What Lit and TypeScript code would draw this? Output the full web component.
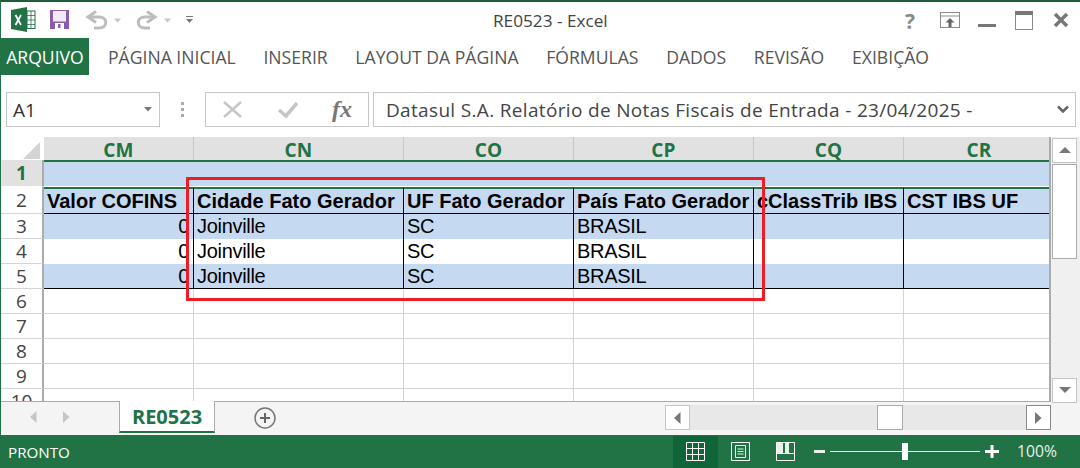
import { LitElement, html, css, svg } from "lit";
import { customElement } from "lit/decorators.js";

const COLS: [string, number][] = [["CM",150],["CN",210],["CO",170],["CP",180],["CQ",150],["CR",151]];
const ROW2 = ["Valor COFINS","Cidade Fato Gerador","UF Fato Gerador","País Fato Gerador","cClassTrib IBS","CST IBS UF"];
const DATA = ["0","Joinville","SC","BRASIL","",""];
const TABS = ["PÁGINA INICIAL","INSERIR","LAYOUT DA PÁGINA","FÓRMULAS","DADOS","REVISÃO","EXIBIÇÃO"];

@customElement("app-root")
export class AppRoot extends LitElement {
  static styles = css`
    :host { display:block; width:1080px; height:468px; overflow:hidden; position:relative; background:#fff; box-sizing:border-box;
      border-top:2px solid #1e5c3c; border-left:1px solid #217346; font-family:"Open Sans","Noto Sans",sans-serif; color:#444; }
    svg { display:block; flex:none; }
    .title { height:36px; display:flex; align-items:center; position:relative; }
    .doc { position:absolute; left:492px; top:9px; font-size:17.2px; line-height:20px; color:#444; white-space:nowrap; }
    .win { position:absolute; left:0; top:0; }
    .tabs { height:37px; display:flex; align-items:center; font-size:17.6px; color:#555; }
    .tabs .file { width:88px; height:37px; background:#217346; color:#fff; display:flex; align-items:center; justify-content:center; margin-right:19px; }
    .tabs .t { margin-right:27.7px; white-space:nowrap; }
    .fbar { height:62px; display:flex; box-sizing:border-box; padding:17px 0 10px 5px; }
    .name { width:154px; height:35px; box-sizing:border-box; border:1px solid #c6c6c6; display:flex; align-items:center; justify-content:space-between; padding:0 7px 0 6px; font-size:19px; color:#333; }
    .dots { width:45px; display:flex; justify-content:center; align-items:center; }
    .fx { width:164px; height:35px; box-sizing:border-box; border:1px solid #c6c6c6; }
    .formula { width:703px; height:35px; box-sizing:border-box; border:1px solid #c6c6c6; margin-left:4px; display:flex; align-items:center; justify-content:space-between; padding:0 6px 0 12px; font-size:19px; color:#444; white-space:nowrap; letter-spacing:.33px; }
    .area { display:flex; height:264px; align-items:flex-start; }
    .sheet { width:1050px; height:264px; overflow:hidden; box-sizing:border-box; border-right:2px solid #ababab; }
    .r { display:flex; height:25px; box-sizing:border-box; }
    .r.h { height:23px; }
    .rh { width:43px; flex:none; box-sizing:border-box; border-right:2px solid #ababab; border-bottom:1px solid #d4d4d4; display:flex; align-items:center; justify-content:center; font:19px "Open Sans",sans-serif; color:#444; background:#fff; }
    .rh.sel { background:#e1e1e1; color:#217346; font-weight:700; border-bottom-color:#fff; }
    .corner { background:#fff; border:0; justify-content:flex-end; align-items:flex-start; }
    .corner svg { margin:5px 3px 0 0; }
    .c { flex:none; box-sizing:border-box; border-right:1px solid #d4d4d4; border-bottom:1px solid #d4d4d4; font:20px/24px "Liberation Sans",Arial,sans-serif; letter-spacing:-.3px; color:#000; padding:0 3px; white-space:nowrap; }
    .c.hd { background:#e1e1e1; border-right:1px solid #c6c6c6; border-bottom:0; color:#217346; font:700 19px/26px "Open Sans",sans-serif; letter-spacing:.2px; text-align:center; padding:0; }
    .r.one { height:27px; }
    .r.one .c { background:#c5d9f1; border-top:2px solid #217346; border-right:0; border-bottom:1px solid #fff; height:27px; }
    .r.two { height:27px; }
    .r.two .c { background:#c5d9f1; border-top:2px solid #217346; border-bottom:1px solid #000; border-right-color:#000; font-weight:700; height:27px; line-height:24px; letter-spacing:0; }
    .r.d .c { border-right-color:#000; border-bottom:0; background:#fff; height:25px; }
    .r.d .c.blue { background:#c5d9f1; }
    .r.d.last .c { border-bottom:1px solid #000; }
    .r.d .c.num { text-align:right; padding-right:4px; overflow:hidden; }
    .vs { width:29px; height:266px; box-sizing:border-box; padding:1px 3px 0 1px; background:#f0f0f0; position:relative; z-index:1; display:flex; flex-direction:column; }
    .vs .b { width:25px; height:25px; background:#fff; border:1px solid #c6c6c6; box-sizing:border-box; display:flex; align-items:center; justify-content:center; }
    .vs .th { width:25px; height:95px; margin-top:1px; background:#fff; border:1px solid #ababab; box-sizing:border-box; }
    .vs .sp { flex:1; }
    .bottom { height:34px; background:#f4f4f4; display:flex; align-items:flex-start; border-top:1px solid #ababab; box-sizing:border-box; position:relative; }
    .nav { width:118px; height:30px; display:flex; align-items:center; gap:26px; padding-left:29px; box-sizing:border-box; }
    .tab { width:94px; height:30px; margin-top:-1px; background:#fff; border-left:1px solid #ababab; border-right:1px solid #ababab; border-bottom:2px solid #217346; color:#217346; font-weight:700; font-size:20px; display:flex; align-items:center; justify-content:center; }
    .plus { margin-left:39px; margin-top:5px; }
    .hs { position:absolute; left:664px; top:3px; width:386px; height:25px; background:#e8e8e8; display:flex; justify-content:space-between; }
    .hs .b { width:25px; height:25px; background:#fff; border:1px solid #c6c6c6; box-sizing:border-box; display:flex; align-items:center; justify-content:center; }
    .hs .b.hov { border-color:#8a8a8a; }
    .hs .th { position:absolute; left:212px; top:0; width:26px; height:25px; background:#fff; border:1px solid #ababab; box-sizing:border-box; }
    .status { height:33px; background:#217346; color:#fff; display:flex; align-items:center; position:relative; font-size:15.2px; }
    .status .rdy { padding-left:7px; }
    .sv { position:absolute; left:0; top:0; }
    .pct { position:absolute; left:1016px; top:6px; font-size:15.7px; line-height:20px; color:#e8f0ea; }
    .red { position:absolute; left:185px; top:175px; width:579px; height:124px; box-sizing:border-box; border:3px solid #ee1c25; pointer-events:none; z-index:2; }
  `;

  private titleIcons() {
    return svg`<svg class="win" width="1079" height="36" viewBox="1 2 1079 36">
      <path d="M11 10 L27 7 V32 L11 29 Z" fill="#217346"/>
      <rect x="27" y="11" width="8" height="17.500" fill="#fff" stroke="#217346"/>
      <path d="M27 15.500h8M27 20h8M27 24.500h8M31 11v17" stroke="#217346" stroke-width=".8"/>
      <path d="M15.500 15 L21 25 M21 15 L15.500 25" stroke="#fff" stroke-width="1.800"/>
      <path d="M50 10 H69 V29 H50 Z" fill="#8a5cb0"/>
      <rect x="53" y="11" width="13" height="10.500" fill="#f1ebf6"/>
      <rect x="55" y="23" width="9" height="6" fill="#fff"/><rect x="58" y="24" width="2.500" height="4" fill="#8a5cb0"/>
      <path d="M96 11.500 L88 17 L96 22.500" fill="none" stroke="#bdbdbd" stroke-width="3"/>
      <path d="M89 17 H99 C108 17 108 28 99 28 H94" fill="none" stroke="#bdbdbd" stroke-width="3"/>
      <path d="M114 18.500h7l-3.500 4z" fill="#c6c6c6"/>
      <path d="M147 11.500 L155 17 L147 22.500" fill="none" stroke="#bdbdbd" stroke-width="3"/>
      <path d="M154 17 H145 C136 17 136 28 145 28 H150" fill="none" stroke="#bdbdbd" stroke-width="3"/>
      <path d="M164 18.500h7l-3.500 4z" fill="#c6c6c6"/>
      <path d="M186 16.500h7" stroke="#777"/><path d="M186 19h7l-3.500 4z" fill="#777"/>
      <text x="905" y="29" font-family="Open Sans,sans-serif" font-size="21" font-weight="700" fill="#8a8a8a">?</text>
      <rect x="940.500" y="12.500" width="19" height="15" fill="none" stroke="#8a8a8a"/><path d="M941 16h19" stroke="#8a8a8a"/>
      <path d="M950 18 L954.500 22.500 H951.500 V27 H948.500 V22.500 H945.500 Z" fill="#666"/>
      <rect x="978" y="24" width="18" height="3" fill="#777"/>
      <rect x="1015.500" y="12.500" width="17" height="17" fill="none" stroke="#8a8a8a"/><rect x="1015" y="11" width="18" height="4" fill="#777"/>
      <path d="M1055 14 L1067 26 M1067 14 L1055 26" stroke="#777" stroke-width="3.500"/>
    </svg>`;
  }

  private row(i: number) {
    const cells = COLS.map(([, w], j) => html`<div class="c ${i === 3 || i === 5 ? "blue" : ""} ${j === 0 ? "num" : ""}" style="width:${w}px">${DATA[j]}</div>`);
    return html`<div class="r d ${i === 5 ? "last" : ""}"><div class="rh">${i}</div>${cells}</div>`;
  }

  render() {
    return html`
      <div class="title">${this.titleIcons()}<div class="doc">RE0523 - Excel</div></div>
      <div class="tabs"><div class="file">ARQUIVO</div>${TABS.map(t => html`<div class="t">${t}</div>`)}</div>
      <div class="fbar">
        <div class="name"><span>A1</span><svg width="8" height="5"><path d="M0 0h8l-4 4.500z" fill="#777"/></svg></div>
        <div class="dots"><svg width="4" height="15"><path d="M0 0h3v3H0zM0 6h3v3H0zM0 12h3v3H0z" fill="#ababab"/></svg></div>
        <div class="fx">
          <svg width="162" height="33">
            <path d="M18 9 L35 24 M35 9 L18 24" stroke="#c6c6c6" stroke-width="2.500"/>
            <path d="M73 17 L80 23 L91 10" fill="none" stroke="#c6c6c6" stroke-width="3.500"/>
            <text x="126" y="24" font-family="Liberation Serif,serif" font-style="italic" font-weight="700" font-size="24" fill="#777">fx</text>
          </svg>
        </div>
        <div class="formula"><span>Datasul S.A. Relatório de Notas Fiscais de Entrada - 23/04/2025 -</span>
          <svg width="12" height="9"><path d="M1 1.500 L6 6.500 L11 1.500" fill="none" stroke="#666" stroke-width="2.500"/></svg></div>
      </div>
      <div class="area">
        <div class="sheet">
          <div class="r h"><div class="rh corner"><svg width="18" height="17"><path d="M17 0 V17 H0 Z" fill="#d4d4d4"/></svg></div>
            ${COLS.map(([n, w]) => html`<div class="c hd" style="width:${w}px">${n}</div>`)}</div>
          <div class="r one"><div class="rh sel">1</div>${COLS.map(([, w]) => html`<div class="c" style="width:${w}px"></div>`)}</div>
          <div class="r two"><div class="rh">2</div>${COLS.map(([, w], j) => html`<div class="c" style="width:${w}px">${ROW2[j]}</div>`)}</div>
          ${[3,4,5].map(i => this.row(i))}
          ${[6,7,8,9,10].map(i => html`<div class="r"><div class="rh">${i}</div>${COLS.map(([, w]) => html`<div class="c" style="width:${w}px"></div>`)}</div>`)}
        </div>
        <div class="vs">
          <div class="b"><svg width="12" height="7"><path d="M6 0 L12 6 H0 Z" fill="#777"/></svg></div>
          <div class="th"></div><div class="sp"></div>
          <div class="b"><svg width="12" height="7"><path d="M0 0 H12 L6 6 Z" fill="#777"/></svg></div>
        </div>
      </div>
      <div class="bottom">
        <div class="nav">
          <svg width="7" height="12"><path d="M6.500 0 V12 L0 6 Z" fill="#c6c6c6"/></svg>
          <svg width="7" height="12"><path d="M0 0 V12 L6.500 6 Z" fill="#c6c6c6"/></svg>
        </div>
        <div class="tab">RE0523</div>
        <svg class="plus" width="22" height="22"><circle cx="11" cy="11" r="10" fill="none" stroke="#777" stroke-width="1.500"/><path d="M11 6 V16 M6 11 H16" stroke="#666" stroke-width="2"/></svg>
        <div class="hs">
          <div class="b"><svg width="7" height="12"><path d="M6.500 0 V12 L0 6 Z" fill="#777"/></svg></div>
          <div class="th"></div>
          <div class="b hov"><svg width="7" height="12"><path d="M0 0 V12 L6.500 6 Z" fill="#777"/></svg></div>
        </div>
      </div>
      <div class="status">
        <div class="rdy">PRONTO</div>
        <svg class="sv" width="1079" height="33" viewBox="1 435 1079 33">
          <rect x="673" y="436" width="45" height="32" fill="#0f6538"/>
          <path d="M686.500 442.500h18v18h-18zM686.500 448.500h18M686.500 454.500h18M692.500 442.500v18M698.500 442.500v18" fill="none" stroke="#fff"/>
          <path d="M731.500 442.500h18v18h-18z" fill="none" stroke="#fff"/>
          <path d="M735.500 445.500h10v12h-10zM737.500 449h6M737.500 451.500h6M737.500 454h6" fill="none" stroke="#dfe" />
          <path d="M776.500 442.500h18v18h-18zM776.500 453.500h18" fill="none" stroke="#fff"/>
          <rect x="777" y="443" width="6" height="10" fill="#e8f0ea"/><rect x="785" y="443" width="4" height="10" fill="#e8f0ea"/>
          <rect x="814" y="450" width="11" height="3" fill="#e8f0ea"/>
          <rect x="830" y="451" width="150" height="1" fill="#fff"/>
          <rect x="902" y="443" width="6" height="17" fill="#fff"/>
          <path d="M985 451.500h14M992 445v13" stroke="#fff" stroke-width="3"/>
        </svg>
        <div class="pct">100%</div>
      </div>
      <div class="red"></div>
    `;
  }
}
